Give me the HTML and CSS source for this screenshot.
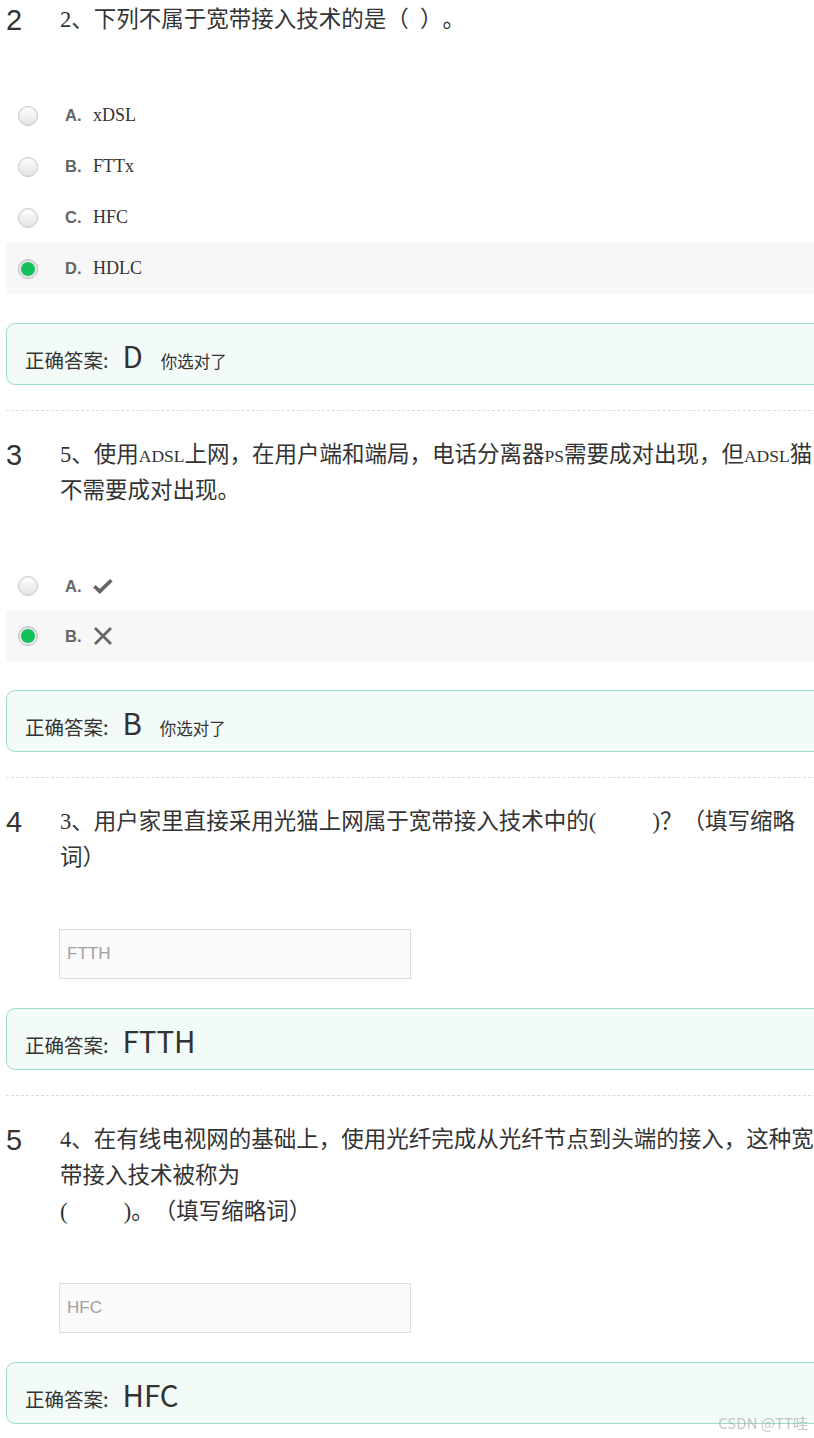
FILE: index.html
```html
<!DOCTYPE html>
<html lang="zh-CN">
<head>
<meta charset="utf-8">
<title>作业</title>
<link rel="stylesheet" href="styles.css">
</head>
<body>
<div class="page">

  <div class="section">
    <div class="q-head">
      <div class="q-num">2</div>
      <div class="q-text">2、下列不属于宽带接入技术的是（ &nbsp;）。</div>
    </div>
    <div class="options">
      <div class="opt"><span class="radio"></span><span class="opt-label">A.</span><span class="opt-text">xDSL</span></div>
      <div class="opt"><span class="radio"></span><span class="opt-label">B.</span><span class="opt-text">FTTx</span></div>
      <div class="opt"><span class="radio"></span><span class="opt-label">C.</span><span class="opt-text">HFC</span></div>
      <div class="opt sel"><span class="radio on"></span><span class="opt-label">D.</span><span class="opt-text">HDLC</span></div>
    </div>
    <div class="answer">
      <div class="ans-row"><span class="ans-label">正确答案:</span><span class="ans-value">D</span><span class="ans-note">你选对了</span></div>
    </div>
  </div>

  <div class="section">
    <div class="q-head">
      <div class="q-num">3</div>
      <div class="q-text">5、使用<span class="en">ADSL</span>上网，在用户端和端局，电话分离器<span class="en">PS</span>需要成对出现，但<span class="en">ADSL</span>猫<br>不需要成对出现。</div>
    </div>
    <div class="options">
      <div class="opt icon-opt"><span class="radio"></span><span class="opt-label">A.</span><span class="opt-icon">
        <svg width="20" height="15" viewBox="0 0 20 15"><path d="M1.4 7.2 L6.8 12.4 L18.4 1.2" fill="none" stroke="#666" stroke-width="3.6"/></svg>
      </span></div>
      <div class="opt icon-opt sel"><span class="radio on"></span><span class="opt-label">B.</span><span class="opt-icon">
        <svg width="20" height="20" viewBox="0 0 20 20"><path d="M2 2 L18 18 M18 2 L2 18" fill="none" stroke="#666" stroke-width="2.7"/></svg>
      </span></div>
    </div>
    <div class="answer">
      <div class="ans-row"><span class="ans-label">正确答案:</span><span class="ans-value">B</span><span class="ans-note">你选对了</span></div>
    </div>
  </div>

  <div class="section">
    <div class="q-head">
      <div class="q-num">4</div>
      <div class="q-text">3、用户家里直接采用光猫上网属于宽带接入技术中的(&nbsp;&nbsp;&nbsp;&nbsp;&nbsp;&nbsp;&nbsp;&nbsp;&nbsp;&nbsp;)？（填写缩略<br>词）</div>
    </div>
    <div class="fill">FTTH</div>
    <div class="answer">
      <div class="ans-row"><span class="ans-label">正确答案:</span><span class="ans-value">FTTH</span></div>
    </div>
  </div>

  <div class="section last">
    <div class="q-head">
      <div class="q-num">5</div>
      <div class="q-text">4、在有线电视网的基础上，使用光纤完成从光纤节点到头端的接入，这种宽<br>带接入技术被称为<br>(&nbsp;&nbsp;&nbsp;&nbsp;&nbsp;&nbsp;&nbsp;&nbsp;&nbsp;&nbsp;)。（填写缩略词）</div>
    </div>
    <div class="fill">HFC</div>
    <div class="answer">
      <div class="ans-row"><span class="ans-label">正确答案:</span><span class="ans-value">HFC</span></div>
    </div>
  </div>

</div>
<div class="watermark">CSDN @TT哇</div>
</body>
</html>
```

FILE: styles.css
```css
html, body {
  margin: 0;
  padding: 0;
  overflow: hidden;
  background: #fff;
}

.page {
  margin-left: 6px;
  width: 830px;
  color: #333;
  text-spacing-trim: space-all;
}

.section {
  padding: 26px 0 25px;
  border-bottom: 1px dashed #dcdcdc;
}

.section:first-child {
  padding-top: 2px;
}

.section.last {
  border-bottom: none;
}

.q-head {
  display: flex;
}

.q-num {
  width: 54px;
  flex: none;
  font-family: "Liberation Sans", Arial, sans-serif;
  font-size: 29px;
  line-height: 36px;
  color: #333;
}

.q-text {
  font-family: "Liberation Serif", "Noto Sans CJK SC", serif;
  font-size: 22.5px;
  line-height: 36px;
  color: #333;
  white-space: nowrap;
  text-spacing-trim: space-all;
}

.q-text .en {
  font-size: 17.5px;
  line-height: 1;
}

.options {
  margin-top: 52px;
}

.opt {
  display: flex;
  align-items: center;
  height: 51px;
  padding-left: 12px;
}

.opt.icon-opt {
  height: 50px;
}

.opt.sel {
  background: #f7f7f7;
}

.radio {
  width: 20px;
  height: 20px;
  box-sizing: border-box;
  border-radius: 50%;
  border: 1px solid #c6c6c6;
  background: linear-gradient(#ffffff, #e2e2e2);
  box-shadow: inset 0 1px 1px rgba(0, 0, 0, 0.06);
  flex: none;
}

.radio.on {
  border-color: #bdbdbd;
  background: radial-gradient(circle, #12c15b 0, #12c15b 6.4px, #e6e6e6 7.4px, #f2f2f2 100%);
}

.opt-label {
  margin-left: 27px;
  width: 28px;
  font-family: "Liberation Sans", Arial, sans-serif;
  font-weight: bold;
  font-size: 16.5px;
  color: #666;
}

.opt-text {
  font-family: "Liberation Serif", "Noto Sans CJK SC", serif;
  font-size: 18px;
  color: #333;
}

.opt-icon {
  display: flex;
  align-items: center;
}

.opt-icon svg {
  display: block;
}

.answer {
  margin-top: 29px;
  height: 62px;
  box-sizing: border-box;
  border: 1px solid #9ddfc6;
  border-radius: 9px;
  background: #f3fbf8;
  display: flex;
  align-items: center;
  padding-left: 18px;
}

.ans-row {
  display: flex;
  align-items: baseline;
  margin-top: 6px;
  font-family: "Noto Sans CJK SC", sans-serif;
  color: #333;
}

.ans-label {
  font-size: 19.5px;
}

.ans-value {
  font-size: 29.5px;
  margin-left: 14px;
  line-height: 1;
}

.ans-note {
  font-size: 16.5px;
  margin-left: 18px;
}

.fill {
  margin-top: 53px;
  margin-left: 53px;
  width: 352px;
  height: 50px;
  box-sizing: border-box;
  border: 1px solid #dddddd;
  background: #fafafa;
  padding-left: 7px;
  display: flex;
  align-items: center;
  font-family: "Liberation Sans", Arial, sans-serif;
  font-size: 17px;
  color: #a0a0a0;
}

.watermark {
  position: fixed;
  right: 6px;
  bottom: 5px;
  font-family: "Noto Sans CJK SC", sans-serif;
  font-size: 15px;
  color: rgba(160, 160, 160, 0.6);
}
```
